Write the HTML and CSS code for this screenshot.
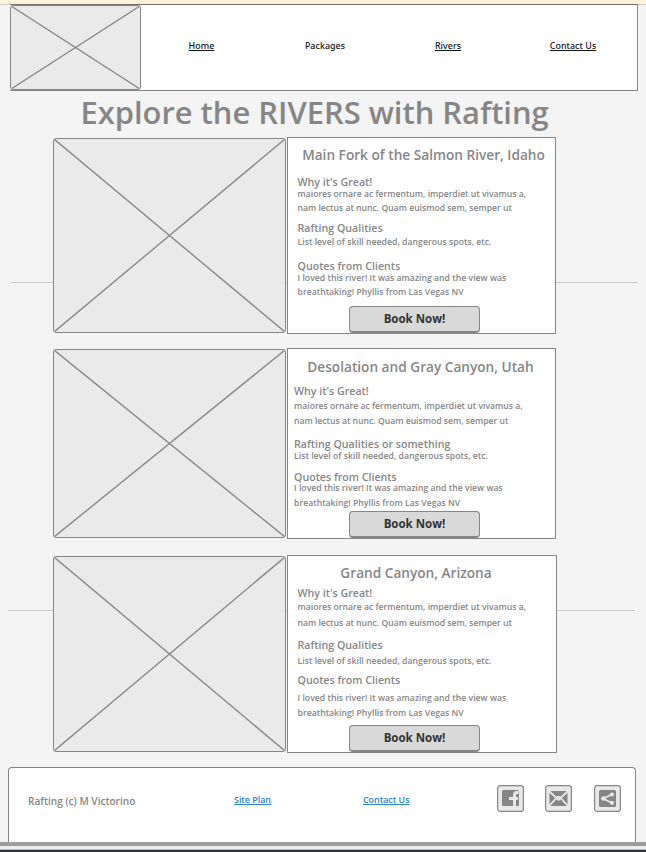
FILE: index.html
```html
<!DOCTYPE html>
<html lang="en">
<head>
<meta charset="utf-8">
<title>Rafting – Rivers</title>
<link rel="stylesheet" href="styles.css">
</head>
<body>
<div class="page">
  <hr class="rule rule-a">
  <hr class="rule rule-b">
  <div class="strip"></div>
  <header class="header">
    <svg class="photo logo" preserveAspectRatio="none" viewBox="0 0 100 100"><path d="M0 0L100 100M100 0L0 100"/></svg>
    <nav class="nav">
      <a class="link">Home</a><a>Packages</a><a class="link">Rivers</a><a class="link">Contact Us</a>
    </nav>
  </header>
  <h1>Explore the RIVERS with Rafting</h1>
  <main>
    <section class="river salmon">
      <svg class="photo" preserveAspectRatio="none" viewBox="0 0 100 100"><path d="M0 0L100 100M100 0L0 100"/></svg>
      <article class="card">
        <h2>Main Fork of the Salmon River, Idaho</h2>
        <h3>Why it's Great!</h3>
        <p>maiores ornare ac fermentum, imperdiet ut vivamus a,<br>nam lectus at nunc. Quam euismod sem, semper ut</p>
        <h3>Rafting Qualities</h3>
        <p class="skill">List level of skill needed, dangerous spots, etc.</p>
        <h3>Quotes from Clients</h3>
        <p class="quote">I loved this river! It was amazing and the view was<br>breathtaking! Phyllis from Las Vegas NV</p>
        <button>Book Now!</button>
      </article>
    </section>
    <section class="river desolation">
      <svg class="photo" preserveAspectRatio="none" viewBox="0 0 100 100"><path d="M0 0L100 100M100 0L0 100"/></svg>
      <article class="card">
        <h2>Desolation and Gray Canyon, Utah</h2>
        <h3>Why it's Great!</h3>
        <p>maiores ornare ac fermentum, imperdiet ut vivamus a,<br>nam lectus at nunc. Quam euismod sem, semper ut</p>
        <h3>Rafting Qualities or something</h3>
        <p class="skill">List level of skill needed, dangerous spots, etc.</p>
        <h3>Quotes from Clients</h3>
        <p class="quote">I loved this river! It was amazing and the view was<br>breathtaking! Phyllis from Las Vegas NV</p>
        <button>Book Now!</button>
      </article>
    </section>
    <section class="river grand">
      <svg class="photo" preserveAspectRatio="none" viewBox="0 0 100 100"><path d="M0 0L100 100M100 0L0 100"/></svg>
      <article class="card">
        <h2>Grand Canyon, Arizona</h2>
        <h3>Why it's Great!</h3>
        <p>maiores ornare ac fermentum, imperdiet ut vivamus a,<br>nam lectus at nunc. Quam euismod sem, semper ut</p>
        <h3>Rafting Qualities</h3>
        <p class="skill">List level of skill needed, dangerous spots, etc.</p>
        <h3>Quotes from Clients</h3>
        <p class="quote">I loved this river! It was amazing and the view was<br>breathtaking! Phyllis from Las Vegas NV</p>
        <button>Book Now!</button>
      </article>
    </section>
  </main>
  <footer class="footer">
    <span class="copy">Rafting (c) M Victorino</span>
    <a class="flink">Site Plan</a>
    <a class="flink">Contact Us</a>
    <div class="social">
      <svg viewBox="0 0 27 27"><rect class="tile" x=".6" y=".6" width="25.8" height="25.8" rx="2.5"/><rect class="ink" x="5" y="5" width="17" height="16" rx="1.5"/><path class="cut" stroke-width="3" d="M21.5 7.5h-1.5q-2.5 0-2.5 2.5V21.500M12 13.500h9"/></svg>
      <svg viewBox="0 0 27 27"><rect class="tile" x=".6" y=".6" width="25.8" height="25.8" rx="2.5"/><rect class="ink" x="4.5" y="6" width="18" height="15"/><path class="cut" stroke-width="1.8" d="M4 6l9.5 9L23 6M4 21l8-8.500q1.500-1.500 3 0L23 21"/></svg>
      <svg viewBox="0 0 27 27"><rect class="tile" x=".6" y=".6" width="25.8" height="25.8" rx="2.5"/><rect class="ink" x="5" y="5" width="17" height="17" rx="1.5"/><path class="cut" stroke-width="1.8" d="M18 9.500l-9 4 9 4.500"/><g class="dot"><circle cx="18" cy="9.5" r="2.1"/><circle cx="9.5" cy="13.5" r="2.3"/><circle cx="18" cy="17.8" r="2.1"/></g></svg>
    </div>
  </footer>
  <div class="bar"></div>
  <div class="edge"></div>
</div>
</body>
</html>
```
FILE: styles.css
```css
* { box-sizing: border-box; margin: 0; padding: 0; }
body { background: #f4f4f4; font-family: "Open Sans", "Noto Sans", sans-serif; color: #868686; }
.page { position: relative; width: 646px; height: 852px; overflow: hidden; display: flex; flex-direction: column; isolation: isolate; }

/* decorative rules behind the river sections */
.rule { position: absolute; z-index: -1; height: 1px; border: 0; background: #c8c8c8; width: 627px; }
.rule-a { left: 11px; top: 282px; }
.rule-b { left: 8px; top: 610px; }

.strip { flex: none; height: 4px; background: #fdf3d9; box-shadow: 0 1px 1px #cfcac0; }
.header { position: relative; flex: none; display: flex; width: 628px; height: 87px; margin-left: 10px; background: #fff; border: 1px solid #868686; border-left: 0; border-top-color: #77706a; }
.photo { display: block; flex: none; width: 233px; background: #eaeaea; border: 1px solid #868686; border-radius: 3px; }
.photo path { stroke: #8a8a8a; stroke-width: 1.4px; vector-effect: non-scaling-stroke; fill: none; }
.logo { width: 131px; height: 85px; }
.nav { flex: 1; display: grid; grid-template-columns: 121px 126px 120px 1fr; justify-items: center; align-items: start; padding: 35px 1px 0 0; font: 500 8.9px/12px "Noto Sans", sans-serif; letter-spacing: .05px; color: #111; }
.nav :last-child { margin-left: 2px; }
.link, .flink { text-decoration: underline; text-underline-offset: 1px; text-decoration-thickness: 1px; }

h1 { flex: none; height: 40px; margin: 1px 0 5px 80.5px; white-space: nowrap; font-weight: 600; font-size: 30.9px; line-height: 40px; color: #868686; }

main { flex: none; padding-left: 53px; }
.river { display: flex; gap: 1px; }
.river > .photo { margin-top: 1px; }
.card { flex: none; display: grid; align-items: start; width: 269px; padding-left: 9.5px; background: #fff; border: 1px solid #868686; white-space: nowrap; }
h2 { text-align: center; font-weight: 600; font-size: 13.65px; line-height: 20px; margin-left: -9.5px; }
h3 { font-weight: 600; font-size: 10.65px; line-height: 14px; }
p { font-weight: 600; font-size: 8.65px; line-height: 14px; overflow: hidden; }
.skill { letter-spacing: .04px; }
.quote { letter-spacing: .03px; }
button { justify-self: start; width: 131px; height: 27px; margin-left: 51.5px; padding-bottom: 1px; font: 700 11.5px/20px "Open Sans", sans-serif; color: #333; background: #d9d9d9; border: 1px solid #868686; border-bottom-width: 2px; border-radius: 4px; }

.salmon { height: 197px; margin-bottom: 14px; }
.salmon .photo { height: 195px; }
.salmon .card { padding-top: 7px; grid-template-rows: 30px 12px 34px 14px 24px 12px 35px 27px; }
.salmon h2 { padding-left: 4px; }

.desolation { height: 191px; margin-bottom: 16px; }
.desolation .photo { height: 189px; }
.desolation .card { padding: 8px 0 0 6px; grid-template-rows: 27px 15px 38px 12px 21px 11px 30px 27px; }
.desolation h2 { margin-left: -6px; padding-right: 2px; }
.desolation p { line-height: 15px; }
.desolation .quote { height: 27px; }
.desolation button { margin-left: 55px; }

.grand { height: 198px; margin-bottom: 14px; }
.grand .photo { height: 196px; }
.grand .card { width: 270px; padding-top: 7px; grid-template-rows: 23px 13px 39px 15px 20px 18px 34px 27px; }
.grand h2 { padding-right: 12px; }
.grand p { line-height: 16px; }
.grand .quote { line-height: 15px; height: 27px; }

.footer { flex: none; display: grid; grid-template-columns: 206px 129px 134px 1fr; align-items: start; width: 628px; height: 75px; margin-left: 8px; padding: 17px 0 0 19px; background: #fff; border: 1px solid #868686; border-bottom: 0; border-radius: 4px 4px 0 0; }
.copy { margin-top: 9px; font-weight: 600; font-size: 10.1px; line-height: 14px; }
.flink { margin-top: 9px; font-weight: 600; font-size: 8.9px; line-height: 12px; color: #2a85c0; }
.social { display: flex; }
.social svg { width: 27px; height: 27px; margin-right: 21px; }
.social svg + svg + svg { margin-left: 1px; }
.tile { fill: #e9e9e9; stroke: #868686; stroke-width: 1.2px; }
.ink { fill: #868686; }
.cut { fill: none; stroke: #e9e9e9; }
.dot { fill: #e9e9e9; }

.bar { flex: none; height: 4px; background: #9c9c9c; }
.edge { flex: none; height: 6px; background: linear-gradient(#eeeeee 0 3px, #b9bcbe 3px 4px, #2b323c 4px); }
```
